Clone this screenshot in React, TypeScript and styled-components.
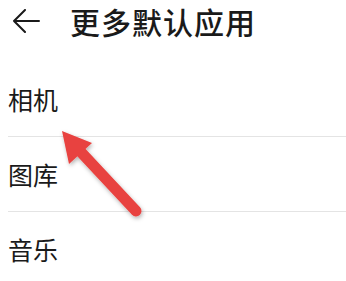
import React from 'react';
import styled, { createGlobalStyle } from 'styled-components';

const GlobalStyle = createGlobalStyle`
  html, body {
    margin: 0;
    padding: 0;
    background: #ffffff;
  }
  body {
    font-family: 'Noto Sans CJK SC', 'Noto Sans', sans-serif;
    color: #1a1a1a;
  }
`;

const Screen = styled.div`
  position: relative;
  width: 346px;
  height: 281px;
  overflow: hidden;
  background: #ffffff;
`;

const TopBar = styled.header`
  display: flex;
  align-items: center;
  height: 42px;
  padding-left: 11px;
  gap: 30px;
`;

const BackButton = styled.button`
  display: flex;
  align-items: center;
  justify-content: center;
  width: 29px;
  height: 29px;
  padding: 0;
  border: none;
  background: none;
  color: #1a1a1a;
`;

const Title = styled.h1`
  margin: 0;
  font-size: 30px;
  font-weight: 500;
  letter-spacing: 1px;
  line-height: 42px;
`;

const List = styled.ul`
  list-style: none;
  margin: 0;
  padding: 20px 0 0 8px;
`;

const Row = styled.li`
  display: flex;
  align-items: center;
  height: 74px;
  border-bottom: 1px solid #e4e4e4;
  font-size: 25px;
  line-height: 1;
`;

const Pointer = styled.svg`
  position: absolute;
  left: 0;
  top: 0;
  pointer-events: none;
`;

const apps = ['相机', '图库', '音乐'];

const App = () => {
  return (
    <>
      <GlobalStyle />
      <Screen>
        <TopBar>
          <BackButton aria-label='返回'>
            <svg width='28' height='24' viewBox='0 0 28 24' fill='none'>
              <path
                d='M27 12H2M13 1L2 12l11 11'
                stroke='#1a1a1a'
                strokeWidth='2'
                strokeLinecap='round'
                strokeLinejoin='round'
              />
            </svg>
          </BackButton>
          <Title>更多默认应用</Title>
        </TopBar>
        <List>
          {apps.map((name) => (
            <Row key={name}>{name}</Row>
          ))}
        </List>
        <Pointer width='346' height='281' viewBox='0 0 346 281'>
          <defs>
            <filter id='arrowShadow' x='-20%' y='-20%' width='140%' height='140%'>
              <feDropShadow dx='1' dy='2' stdDeviation='2' floodColor='#000' floodOpacity='0.3' />
            </filter>
          </defs>
          <g filter='url(#arrowShadow)' fill='#e8433f'>
            <line
              x1='136'
              y1='211'
              x2='79'
              y2='150'
              stroke='#e8433f'
              strokeWidth='11'
              strokeLinecap='round'
            />
            <polygon points='62,131 69,164 92,143' />
          </g>
        </Pointer>
      </Screen>
    </>
  );
};

export default App;
